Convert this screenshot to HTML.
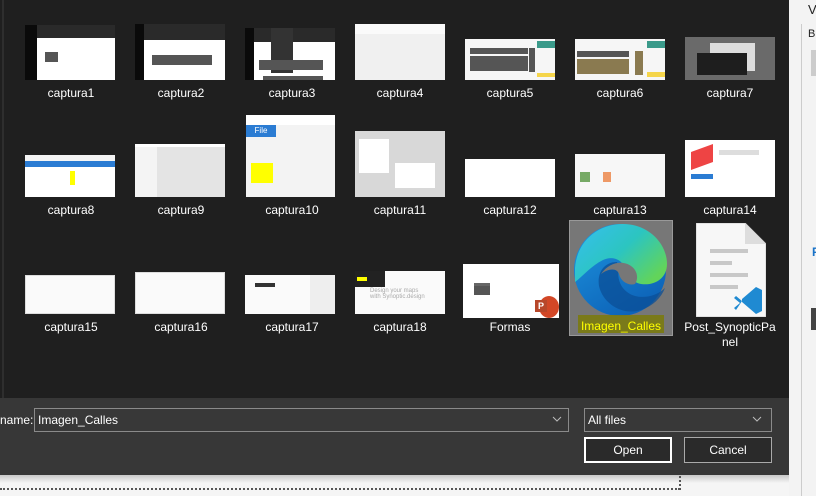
<!DOCTYPE html>
<html><head><style>
*{margin:0;padding:0;box-sizing:border-box}
body{width:816px;height:496px;overflow:hidden;background:#f0f0f0;font-family:"Liberation Sans",sans-serif;position:relative}
.a{position:absolute}
.lbl{position:absolute;color:#fff;font-size:12px;text-align:center;width:110px}
.t{position:absolute;background:#fff;overflow:hidden}
</style></head><body>
<!-- right panel -->
<div class="a" style="left:789px;top:0;width:27px;height:496px;background:#f3f3f3"></div>
<div class="a" style="left:801px;top:24px;width:1px;height:472px;background:#ccc"></div>
<div class="a" style="left:808px;top:2px;font-size:13px;color:#222">V</div>
<div class="a" style="left:808px;top:28px;font-size:11px;color:#222">B</div>
<div class="a" style="left:811px;top:50px;width:8px;height:26px;background:#ccc"></div>
<div class="a" style="left:812px;top:245px;font-size:12px;color:#1a73c8;font-weight:bold">F</div>
<div class="a" style="left:811px;top:308px;width:8px;height:22px;background:#444"></div>
<!-- dialog -->
<div class="a" style="left:0;top:0;width:789px;height:398px;background:#1f1f1f"></div>
<div class="a" style="left:2px;top:0;width:2px;height:398px;background:#2e2e2e"></div>
<div class="a" style="left:0;top:398px;width:789px;height:77px;background:#373737"></div>
<div class="a" style="left:0;top:475px;width:789px;height:21px;background:linear-gradient(#c8c8c8,#f5f5f5 8px)"></div>
<div class="a" style="left:0;top:488px;width:680px;border-top:2px dotted #555"></div>
<div class="a" style="left:679px;top:476px;height:14px;border-left:2px dotted #555"></div>

<!-- row1 -->
<div class="t" style="left:25px;top:25px;width:90px;height:55px"><div class="a" style="left:0;top:0;width:90px;height:13px;background:#2a2a2a"></div><div class="a" style="left:0;top:0;width:12px;height:55px;background:#0a0a0a"></div><div class="a" style="left:20px;top:27px;width:13px;height:10px;background:#555"></div></div>
<div class="t" style="left:135px;top:24px;width:90px;height:56px"><div class="a" style="left:0;top:0;width:90px;height:16px;background:#2a2a2a"></div><div class="a" style="left:0;top:0;width:9px;height:56px;background:#0a0a0a"></div><div class="a" style="left:17px;top:31px;width:60px;height:10px;background:#555"></div></div>
<div class="t" style="left:245px;top:28px;width:90px;height:52px"><div class="a" style="left:0;top:0;width:90px;height:14px;background:#2a2a2a"></div><div class="a" style="left:0;top:0;width:9px;height:52px;background:#0a0a0a"></div><div class="a" style="left:18px;top:48px;width:60px;height:10px;background:#555"></div><div class="a" style="left:26px;top:0;width:22px;height:45px;background:#333"></div><div class="a" style="left:18px;top:50px;width:60px;height:2px;background:#555"></div><div class="a" style="left:14px;top:32px;width:64px;height:10px;background:#555"></div></div>
<div class="t" style="left:355px;top:24px;width:90px;height:56px;background:#f0f0f0"><div class="a" style="left:0;top:0;width:90px;height:10px;background:#fafafa"></div></div>
<div class="t" style="left:465px;top:39px;width:90px;height:41px;background:#f6f6f6"><div class="a" style="left:5px;top:9px;width:58px;height:6px;background:#555"></div><div class="a" style="left:5px;top:17px;width:58px;height:15px;background:#555"></div><div class="a" style="left:64px;top:9px;width:6px;height:24px;background:#555"></div><div class="a" style="left:72px;top:34px;width:18px;height:4px;background:#f5d54a"></div><div class="a" style="left:72px;top:2px;width:18px;height:7px;background:#3a9a8a"></div></div>
<div class="t" style="left:575px;top:39px;width:90px;height:41px;background:#f6f6f6"><div class="a" style="left:2px;top:12px;width:52px;height:6px;background:#555"></div><div class="a" style="left:2px;top:20px;width:52px;height:15px;background:#8a7a50"></div><div class="a" style="left:60px;top:12px;width:8px;height:24px;background:#8a7a50"></div><div class="a" style="left:72px;top:33px;width:18px;height:5px;background:#f5d54a"></div><div class="a" style="left:72px;top:2px;width:18px;height:7px;background:#3a9a8a"></div></div>
<div class="t" style="left:685px;top:37px;width:90px;height:43px;background:#6a6a6a"><div class="a" style="left:25px;top:6px;width:45px;height:28px;background:#ddd"></div><div class="a" style="left:12px;top:16px;width:50px;height:22px;background:#1e1e1e"></div></div>
<!-- row2 -->
<div class="t" style="left:25px;top:155px;width:90px;height:42px"><div class="a" style="left:0;top:0;width:90px;height:6px;background:#f4f4f4"></div><div class="a" style="left:0;top:6px;width:90px;height:6px;background:#2b7cd3"></div><div class="a" style="left:45px;top:16px;width:5px;height:14px;background:#ff0"></div></div>
<div class="t" style="left:135px;top:144px;width:90px;height:53px;background:#e4e4e4"><div class="a" style="left:0;top:0;width:22px;height:53px;background:#f4f4f4"></div><div class="a" style="left:0;top:0;width:90px;height:3px;background:#fff"></div></div>
<div class="t" style="left:246px;top:115px;width:89px;height:82px;background:#f3f3f3"><div class="a" style="left:0;top:0;width:89px;height:10px;background:#fff"></div><div class="a" style="left:0;top:10px;width:30px;height:12px;background:#2b7cd3;color:#fff;font-size:8px;text-align:center;line-height:12px">File</div><div class="a" style="left:5px;top:48px;width:22px;height:20px;background:#ff0"></div></div>
<div class="t" style="left:355px;top:131px;width:90px;height:66px;background:#d8d8d8"><div class="a" style="left:4px;top:8px;width:30px;height:34px;background:#fff"></div><div class="a" style="left:40px;top:32px;width:40px;height:25px;background:#fff"></div></div>
<div class="t" style="left:465px;top:159px;width:90px;height:38px;background:#fff"></div>
<div class="t" style="left:575px;top:154px;width:90px;height:43px;background:#f7f7f7"><div class="a" style="left:5px;top:18px;width:10px;height:10px;background:#7a6"></div><div class="a" style="left:28px;top:18px;width:8px;height:10px;background:#e96"></div></div>
<div class="t" style="left:685px;top:140px;width:90px;height:57px;background:#fff"><div class="a" style="left:6px;top:8px;width:22px;height:18px;background:#e44;transform:skewY(-20deg)"></div><div class="a" style="left:6px;top:34px;width:22px;height:5px;background:#2b7cd3"></div><div class="a" style="left:34px;top:10px;width:40px;height:5px;background:#ddd"></div></div>
<!-- row3 -->
<div class="t" style="left:25px;top:275px;width:90px;height:39px;background:#fafafa;border:1px solid #ddd"></div>
<div class="t" style="left:135px;top:272px;width:90px;height:42px;background:#fafafa;border:1px solid #ddd"></div>
<div class="t" style="left:245px;top:275px;width:90px;height:39px;background:#fafafa"><div class="a" style="left:10px;top:8px;width:20px;height:4px;background:#333"></div><div class="a" style="left:65px;top:0;width:25px;height:39px;background:#eee"></div></div>
<div class="t" style="left:355px;top:271px;width:90px;height:43px;background:#fafafa"><div class="a" style="left:0;top:0;width:30px;height:16px;background:#222"></div><div class="a" style="left:2px;top:6px;width:10px;height:4px;background:#ff0"></div><div class="a" style="left:15px;top:17px;width:60px;height:14px;color:#aaa;font-size:6px">Design your maps with Synoptic.design</div></div>
<div class="t" style="left:463px;top:264px;width:96px;height:54px;background:#fff"><div class="a" style="left:11px;top:19px;width:16px;height:12px;background:#555;border-top:3px solid #666"></div><div class="a" style="left:76px;top:32px;width:20px;height:22px;border-radius:50%;background:#d24726"></div><div class="a" style="left:72px;top:36px;width:12px;height:12px;background:#b7472a;color:#fff;font-size:9px;font-weight:bold;text-align:center;line-height:12px">P</div></div>
<!-- selected edge -->
<div class="a" style="left:569px;top:220px;width:104px;height:116px;background:#777;border:1px solid #999"></div>
<svg class="a" style="left:573px;top:222px" width="96" height="96" viewBox="0 0 96 96">
<defs><linearGradient id="g1" x1="0" y1="0" x2="1" y2="0.7"><stop offset="0" stop-color="#36bff0"/><stop offset="0.55" stop-color="#2cc5c0"/><stop offset="1" stop-color="#62d45a"/></linearGradient>
<linearGradient id="g2" x1="0" y1="0" x2="0.6" y2="1"><stop offset="0" stop-color="#1e96e0"/><stop offset="1" stop-color="#0d63b8"/></linearGradient></defs>
<circle cx="47" cy="48" r="46" fill="url(#g2)"/>
<path d="M2 46 C4 18 26 2 50 2 C76 2 94 22 94 42 C94 56 82 64 68 62 C58 60 54 52 52 46 C48 36 38 34 30 38 C18 44 10 54 2 60 Z" fill="url(#g1)"/>
<path d="M44 40 C30 40 24 52 26 64 C30 82 50 94 68 88 C80 84 88 76 92 66 C82 76 64 78 54 70 C46 64 44 54 46 46 Z" fill="#0b4f97" opacity="0.75"/>
<path d="M28 52 C36 40 50 38 58 44 C64 48 66 56 62 62 C56 64 48 60 46 52 C44 46 36 46 28 52 Z" fill="#777"/>
</svg>
<div class="a" style="left:578px;top:315px;width:86px;height:18px;background:#7a7a10;opacity:.9"></div>
<div class="lbl" style="left:566px;top:319px;color:#ff0">Imagen_Calles</div>
<!-- doc icon -->
<svg class="a" style="left:696px;top:223px" width="70" height="94" viewBox="0 0 70 94">
<path d="M0 0 H49 L70 21 V94 H0 Z" fill="#f7f7f7" stroke="#ccc"/>
<path d="M49 0 V21 H70 Z" fill="#ddd"/>
<rect x="14" y="26" width="38" height="4" fill="#c8c8c8"/><rect x="14" y="38" width="22" height="4" fill="#c8c8c8"/><rect x="14" y="50" width="38" height="4" fill="#c8c8c8"/><rect x="14" y="62" width="28" height="4" fill="#c8c8c8"/>
<path d="M46 76 L60 64 L66 67 V88 L60 91 L46 79 Z" fill="#1f8ad2"/><path d="M46 78 L40 73 L38 75 L44 80 L38 85 L40 87 Z" fill="#1f8ad2"/>
</svg>
<!-- labels -->
<div class="lbl" style="left:16px;top:86px">captura1</div>
<div class="lbl" style="left:126px;top:86px">captura2</div>
<div class="lbl" style="left:237px;top:86px">captura3</div>
<div class="lbl" style="left:345px;top:86px">captura4</div>
<div class="lbl" style="left:455px;top:86px">captura5</div>
<div class="lbl" style="left:565px;top:86px">captura6</div>
<div class="lbl" style="left:675px;top:86px">captura7</div>
<div class="lbl" style="left:16px;top:203px">captura8</div>
<div class="lbl" style="left:126px;top:203px">captura9</div>
<div class="lbl" style="left:237px;top:203px">captura10</div>
<div class="lbl" style="left:345px;top:203px">captura11</div>
<div class="lbl" style="left:455px;top:203px">captura12</div>
<div class="lbl" style="left:565px;top:203px">captura13</div>
<div class="lbl" style="left:675px;top:203px">captura14</div>
<div class="lbl" style="left:16px;top:320px">captura15</div>
<div class="lbl" style="left:126px;top:320px">captura16</div>
<div class="lbl" style="left:237px;top:320px">captura17</div>
<div class="lbl" style="left:345px;top:320px">captura18</div>
<div class="lbl" style="left:455px;top:320px">Formas</div>
<div class="lbl" style="left:675px;top:320px;line-height:15px">Post_SynopticPa<br>nel</div>
<!-- bottom -->
<div class="a" style="left:0;top:413px;color:#fff;font-size:12px">name:</div>
<div class="a" style="left:34px;top:408px;width:535px;height:24px;border:1px solid #8a8a8a;background:#383838;color:#fff;font-size:12px;padding:4px 3px">Imagen_Calles</div>
<svg class="a" style="left:552px;top:416px" width="10" height="7"><path d="M1 1 L5 5 L9 1" stroke="#bbb" fill="none"/></svg>
<div class="a" style="left:584px;top:408px;width:188px;height:24px;border:1px solid #8a8a8a;background:#383838;color:#fff;font-size:12px;padding:4px 3px">All files</div>
<svg class="a" style="left:752px;top:416px" width="10" height="7"><path d="M1 1 L5 5 L9 1" stroke="#bbb" fill="none"/></svg>
<div class="a" style="left:584px;top:437px;width:88px;height:26px;border:2px solid #fff;background:#2a2a2a;color:#fff;font-size:12px;text-align:center;line-height:22px">Open</div>
<div class="a" style="left:684px;top:437px;width:88px;height:26px;border:1px solid #aaa;background:#2a2a2a;color:#fff;font-size:12px;text-align:center;line-height:24px">Cancel</div>
</body></html>
